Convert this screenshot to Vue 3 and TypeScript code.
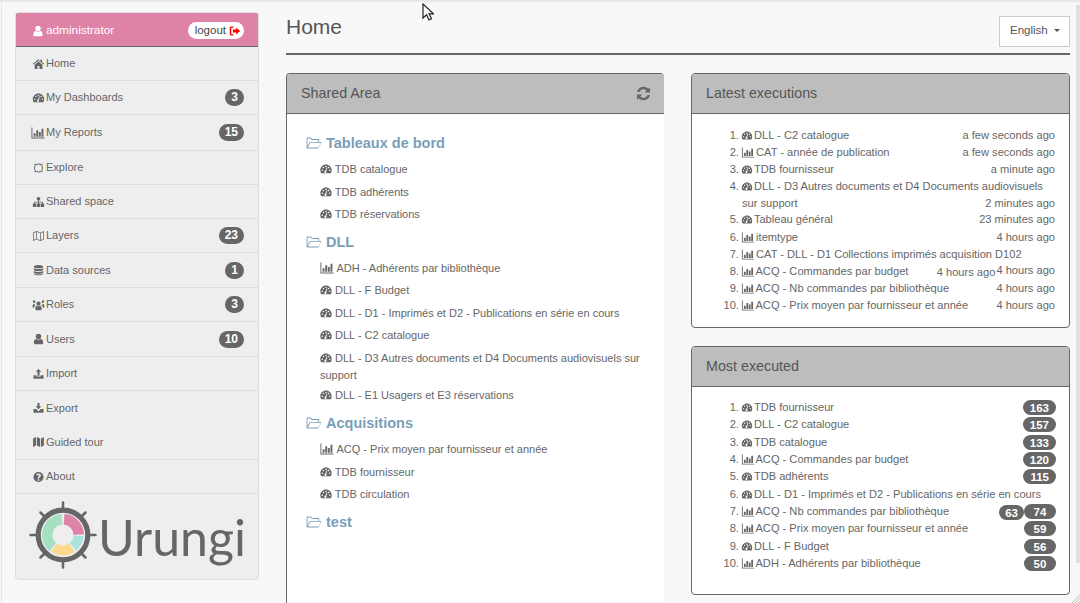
<script setup lang="ts">
const ring = (x: number, y: number, r: number) =>
  `M${x - r} ${y}a${r} ${r} 0 1 0 ${2 * r} 0a${r} ${r} 0 1 0 ${-2 * r} 0z`

const pt = (r: number, deg: number) => {
  const a = ((deg - 90) * Math.PI) / 180
  return `${(34 + r * Math.cos(a)).toFixed(2)} ${(34 + r * Math.sin(a)).toFixed(2)}`
}
const seg = (ro: number, ri: number, from: number, to: number) => {
  const large = to - from > 180 ? 1 : 0
  return `M${pt(ro, from)}A${ro} ${ro} 0 ${large} 1 ${pt(ro, to)}L${pt(ri, to)}A${ri} ${ri} 0 ${large} 0 ${pt(ri, from)}z`
}

const icons: Record<string, string> = {
  user: 'M8 8.200a3.600 3.600 0 1 0 0-7.200 3.600 3.600 0 0 0 0 7.200zM1.800 13.400c0-3 1-5.400 3-5.400.8.700 1.800 1.100 3.200 1.100s2.400-.4 3.200-1.100c2 0 3 2.400 3 5.400 0 1-.7 1.600-1.600 1.600H3.400c-.9 0-1.600-.6-1.600-1.600z',
  home: 'M8 1.500.4 7.800l.8 1L8 3.200l6.800 5.600.8-1-3-2.500V2h-2v2.600zM8 4.600 2.800 8.900v5.600h3.900v-3.800h2.600v3.800h3.900V8.900z',
  dash:
    'M8 2C3.800 2 .4 5.400.4 9.600c0 1.400.4 2.700 1 3.800.1.200.3.300.5.300h12.200c.2 0 .4-.1.500-.3.600-1.100 1-2.400 1-3.800C15.600 5.400 12.200 2 8 2z' +
    ring(3, 9.6, 1) + ring(4.5, 6, 1) + ring(8, 4.6, 1) + ring(11.5, 6, 1) + ring(13, 9.6, 1) +
    'M7 10.300 9.200 5.600l.7.300-1.600 4.800a1.400 1.400 0 1 1-1.300-.4z',
  bars: 'M.5 2h1.100v11.400h13.900v1.100H.5zM3 8.500h2.200v3.900H3zM6 5.200h2.200v7.200H6zM9 7h2.200v5.400H9zM12 3.500h2.200v8.900H12z',
  notch:
    ring(8, 8, 6) + ring(8, 8, 4.7) +
    'M2.300 2.900l1-.9 1.300 1.300-1 1zM13.700 2.900l-1-.9-1.300 1.300 1 1zM2.300 13.100l1 .9 1.300-1.300-1-1zM13.700 13.100l-1 .9-1.300-1.300 1-1z',
  sitemap: 'M5.800 1.500h4.400v4H8.600v2h5.200v2.500h1.700v4.500h-4.500V10h1.700V8.600H8.600V10h1.600v4.500H5.800V10h1.600V8.600H3.300V10H5v4.500H.5V10h1.700V7.500h5.200v-2H5.800z',
  map: 'M.7 3.200 5.400 1.400l5.200 1.800 4.700-1.800v11.400l-4.700 1.800-5.200-1.800-4.700 1.800zM1.700 3.900v9.200l3.200-1.200V2.700zM5.900 2.700v9.200l4.200 1.400V4.100zM11.100 4.100v9.200l3.200-1.200V2.900z',
  db: 'M8 1.300c3.400 0 6.300 1 6.300 2.200S11.400 5.700 8 5.700 1.700 4.700 1.700 3.500 4.600 1.300 8 1.300zM1.700 5.200c1 1 3.500 1.600 6.300 1.600s5.300-.6 6.300-1.600v2.100C14.300 8.500 11.400 9.400 8 9.400S1.700 8.500 1.700 7.300zM1.700 9c1 1 3.500 1.600 6.300 1.600s5.300-.6 6.300-1.600v2.100c0 1.200-2.900 2.100-6.300 2.100S1.700 12.300 1.700 11.100zM1.700 12.300c1 1 3.500 1.600 6.300 1.600s5.300-.6 6.300-1.600v1c0 1.200-2.900 1.700-6.300 1.700s-6.300-.5-6.300-1.700z',
  users:
    ring(8, 6.2, 2.8) +
    'M.8 1.800a2.400 2.400 0 0 1 2.600 1c.5.700.6 1.400.3 2.200-.7.600-1.400.6-2.200.2-.8-.7-1-2.200-.7-3.400zM15.200 1.800a2.400 2.400 0 0 0-2.600 1c-.5.700-.6 1.400-.3 2.200.7.600 1.400.6 2.200.2.800-.7 1-2.200.7-3.400z' +
    'M3.800 13.800c0-2.800.7-4.700 2-4.800.7.500 1.300.7 2.200.7s1.500-.2 2.200-.7c1.300.1 2 2 2 4.800 0 .6-.5 1.200-1 1.200H4.800c-.5 0-1-.6-1-1.200zM.2 9.500C.2 8 .5 6.700 1.500 6.700c.5.500 1.100.7 1.800.7.100.5.300.9.600 1.200-1 .4-1.700 1.400-1.900 3H1c-.5 0-.8-.6-.8-2.100zM15.800 9.500c0-1.500-.3-2.800-1.300-2.800-.5.500-1.100.7-1.800.7-.1.500-.3.900-.6 1.200 1 .4 1.700 1.400 1.900 3H15c.5 0 .8-.6.800-2.100z',
  upload: 'M8 1.200 11.800 5H9.400v5.200H6.600V5H4.200zM1.300 9.600h3.900v1.800h5.600V9.600h3.900v4.800H1.300z',
  download: 'M6.600 1.200h2.800v4.600h2.400L8 9.700 4.200 5.800h2.400zM1.300 9.400h3.600L8 12.500l3.100-3.100h3.600v5H1.300z',
  fmap: 'M.8 3.200 4.600 1.400v11.400L.8 14.600zM5.800 1.400l4.400 1.800v11.400l-4.400-1.800zM11.400 3.200l3.800-1.800v11.400l-3.800 1.800z',
  help:
    'M8 1.200a6.800 6.800 0 1 0 0 13.600A6.800 6.800 0 0 0 8 1.200zM7 11h2v1.900H7zM8 3.300c1.800 0 3.200 1.100 3.200 2.700 0 1.300-.7 1.900-1.400 2.300-.5.300-.8.500-.8 1V10H7V9c0-1.100.5-1.700 1.200-2.100.5-.3.900-.5.900-.9 0-.5-.5-.8-1.100-.8S7 5.600 6.500 6.100L5 5c.7-1 1.700-1.700 3-1.700z',
  logout: 'M1 3.200C1 2.400 1.700 2 2.400 2H6v1.800H3v8.400h3V14H2.400C1.700 14 1 13.600 1 12.800zM9.500 3.600 15 8l-5.500 4.400V10H5.200V6h4.300z',
  folder:
    'M.6 3.400c0-.5.4-.9.900-.9h3.300l1.500 1.500h6c.5 0 .9.400.9.900V7h1.700c.5 0 .6.400.4.700l-2.700 5.400c-.1.300-.4.400-.7.400H1.500c-.5 0-.9-.4-.9-.9zM1.500 3.400v7.800l2-3.600c.2-.4.500-.6.900-.6h7.900V5.300c0-.2-.1-.4-.4-.4H6L4.500 3.400zM4.400 7.800l-2.600 4.800h10.700l2.400-4.800z',
  refresh:
    'M15 1.200v5.800H9.200l2.200-2.200A4.600 4.600 0 0 0 3.700 6.500H1.100A7.100 7.100 0 0 1 13.200 3zM1 14.800V9h5.800l-2.200 2.200a4.600 4.600 0 0 0 7.700-1.700h2.600A7.100 7.100 0 0 1 2.800 13z',
}
const vb = (name: string) => (name === 'bars' ? '0 1.500 16 13.500' : '0 0 16 16')

interface NavItem { icon: string; label: string; badge?: number; h: string }
const nav: NavItem[] = [
  { icon: 'home', label: 'Home', h: 'r34' },
  { icon: 'dash', label: 'My Dashboards', badge: 3, h: 'r34' },
  { icon: 'bars', label: 'My Reports', badge: 15, h: 'r36' },
  { icon: 'notch', label: 'Explore', h: 'r34' },
  { icon: 'sitemap', label: 'Shared space', h: 'r34' },
  { icon: 'map', label: 'Layers', badge: 23, h: 'r34' },
  { icon: 'db', label: 'Data sources', badge: 1, h: 'r35' },
  { icon: 'users', label: 'Roles', badge: 3, h: 'r34' },
  { icon: 'user', label: 'Users', badge: 10, h: 'r35' },
  { icon: 'upload', label: 'Import', h: 'r34' },
  { icon: 'download', label: 'Export', h: 'r34 plain' },
  { icon: 'fmap', label: 'Guided tour', h: 'r35' },
  { icon: 'help', label: 'About', h: 'r34' },
]

interface TreeItem { icon: string; label: string; wrap?: boolean }
interface TreeFolder { name: string; items: TreeItem[] }
const tree: TreeFolder[] = [
  { name: 'Tableaux de bord', items: [
    { icon: 'dash', label: 'TDB catalogue' },
    { icon: 'dash', label: 'TDB adhérents' },
    { icon: 'dash', label: 'TDB réservations' },
  ] },
  { name: 'DLL', items: [
    { icon: 'bars', label: 'ADH - Adhérents par bibliothèque' },
    { icon: 'dash', label: 'DLL - F Budget' },
    { icon: 'dash', label: 'DLL - D1 - Imprimés et D2 - Publications en série en cours' },
    { icon: 'dash', label: 'DLL - C2 catalogue' },
    { icon: 'dash', label: 'DLL - D3 Autres documents et D4 Documents audiovisuels sur support', wrap: true },
    { icon: 'dash', label: 'DLL - E1 Usagers et E3 réservations' },
  ] },
  { name: 'Acquisitions', items: [
    { icon: 'bars', label: 'ACQ - Prix moyen par fournisseur et année' },
    { icon: 'dash', label: 'TDB fournisseur' },
    { icon: 'dash', label: 'TDB circulation' },
  ] },
  { name: 'test', items: [] },
]

interface LatestItem { icon: string; label: string; time: string; extra?: string; tight?: boolean }
const latest: LatestItem[] = [
  { icon: 'dash', label: 'DLL - C2 catalogue', time: 'a few seconds ago' },
  { icon: 'bars', label: 'CAT - année de publication', time: 'a few seconds ago' },
  { icon: 'dash', label: 'TDB fournisseur', time: 'a minute ago' },
  { icon: 'dash', label: 'DLL - D3 Autres documents et D4 Documents audiovisuels sur support', time: '2 minutes ago', tight: true },
  { icon: 'dash', label: 'Tableau général', time: '23 minutes ago' },
  { icon: 'bars', label: 'itemtype', time: '4 hours ago' },
  { icon: 'bars', label: 'CAT - DLL - D1 Collections imprimés acquisition D102', time: '' },
  { icon: 'bars', label: 'ACQ - Commandes par budget', time: '4 hours ago', extra: '4 hours ago' },
  { icon: 'bars', label: 'ACQ - Nb commandes par bibliothèque', time: '4 hours ago' },
  { icon: 'bars', label: 'ACQ - Prix moyen par fournisseur et année', time: '4 hours ago' },
]

interface MostItem { icon: string; label: string; count?: number; extra?: number }
const most: MostItem[] = [
  { icon: 'dash', label: 'TDB fournisseur', count: 163 },
  { icon: 'dash', label: 'DLL - C2 catalogue', count: 157 },
  { icon: 'dash', label: 'TDB catalogue', count: 133 },
  { icon: 'bars', label: 'ACQ - Commandes par budget', count: 120 },
  { icon: 'dash', label: 'TDB adhérents', count: 115 },
  { icon: 'dash', label: 'DLL - D1 - Imprimés et D2 - Publications en série en cours' },
  { icon: 'bars', label: 'ACQ - Nb commandes par bibliothèque', count: 74, extra: 63 },
  { icon: 'bars', label: 'ACQ - Prix moyen par fournisseur et année', count: 59 },
  { icon: 'dash', label: 'DLL - F Budget', count: 56 },
  { icon: 'bars', label: 'ADH - Adhérents par bibliothèque', count: 50 },
]
</script>

<template>
  <div class="page">
    <aside class="side">
      <div class="side-head">
        <svg class="ic white" viewBox="0 0 16 16"><path :d="icons.user" /></svg>
        <span class="who">administrator</span>
        <span class="logout">logout<svg class="ic red" viewBox="0 0 16 16"><path :d="icons.logout" /></svg></span>
      </div>
      <div v-for="n in nav" :key="n.label" class="nav-row" :class="n.h">
        <svg class="ic" :class="{ wide: n.icon === 'bars' }" :viewBox="vb(n.icon)"><path fill-rule="evenodd" :d="icons[n.icon]" /></svg>
        <span class="nav-label">{{ n.label }}</span>
        <span v-if="n.badge" class="badge">{{ n.badge }}</span>
      </div>
      <div class="logo">
        <svg class="wheel" viewBox="0 0 68 68">
          <g stroke="#666" stroke-width="2.500" stroke-linecap="round">
            <path d="M34 1.500v65M1.500 34h65M11.500 11.500l45 45M56.500 11.500l-45 45" />
          </g>
          <circle cx="34" cy="34" r="24.800" fill="#eee" stroke="#666" stroke-width="5.200" />
          <path :d="seg(21, 10.500, 4, 88)" fill="#de82a7" />
          <path :d="seg(20.500, 10.500, 93, 140)" fill="#a8e4dc" />
          <path :d="seg(20.500, 10.500, 145, 215)" fill="#fbd98f" />
          <path :d="seg(21, 10.500, 220, 356)" fill="#a5e0c3" />
        </svg>
        <span class="brand">Urungi</span>
      </div>
    </aside>

    <main class="main">
      <header class="top">
        <h1>Home</h1>
        <button class="lang">English <i class="caret"></i></button>
      </header>
      <div class="cols">
        <section class="panel shared">
          <div class="ph">
            <span>Shared Area</span>
            <svg class="ic refresh" viewBox="0 0 16 16"><path :d="icons.refresh" /></svg>
          </div>
          <div class="tree">
            <div v-for="f in tree" :key="f.name" class="folder">
              <div class="fname">
                <svg class="fic" viewBox="0 0 16 16"><path fill-rule="evenodd" :d="icons.folder" /></svg>{{ f.name }}
              </div>
              <div v-for="it in f.items" :key="it.label" class="titem" :class="{ wrap: it.wrap }">
                <svg class="ic" :class="{ wide: it.icon === 'bars' }" :viewBox="vb(it.icon)"><path fill-rule="evenodd" :d="icons[it.icon]" /></svg>
                {{ it.label }}
              </div>
            </div>
          </div>
        </section>

        <div class="right">
          <section class="panel latest">
            <div class="ph"><span>Latest executions</span></div>
            <ol class="list">
              <li v-for="l in latest" :key="l.label" :class="{ tight: l.tight }">
                <svg class="ic" :class="{ wide: l.icon === 'bars' }" :viewBox="vb(l.icon)"><path fill-rule="evenodd" :d="icons[l.icon]" /></svg>
                {{ l.label }}
                <span class="time" :class="{ up: l.extra }">{{ l.time }}</span>
                <span v-if="l.extra" class="time second">{{ l.extra }}</span>
              </li>
            </ol>
          </section>
          <section class="panel most">
            <div class="ph"><span>Most executed</span></div>
            <ol class="list">
              <li v-for="m in most" :key="m.label">
                <span v-if="m.count" class="pill">{{ m.count }}</span>
                <span v-if="m.extra" class="pill second">{{ m.extra }}</span>
                <svg class="ic" :class="{ wide: m.icon === 'bars' }" :viewBox="vb(m.icon)"><path fill-rule="evenodd" :d="icons[m.icon]" /></svg>
                {{ m.label }}
              </li>
            </ol>
          </section>
        </div>
      </div>
    </main>

    <svg class="cursor" viewBox="0 0 12 18"><path d="M1 1v14l3.500-3.300L7 17l2.500-1.200L7 10.800h4.500z" fill="#fff" stroke="#222" stroke-width="1.200" /></svg>
    <div class="scroll"></div>
    <svg class="grip" viewBox="0 0 8 8"><path d="M0 8 8 0M3 8l5-5M6 8l2-2" stroke="#bbb" stroke-width="1" fill="none" /></svg>
  </div>
</template>

<style>
html, body { margin: 0; background: #f8f8f8; overflow: hidden; }
</style>

<style scoped>
.page {
  position: relative;
  box-sizing: border-box;
  width: 1080px;
  height: 603px;
  overflow: hidden;
  display: flex;
  align-items: flex-start;
  gap: 27px;
  padding: 10px 10px 0 15px;
  background: #f8f8f8;
  border-top: 2px solid #e7e7e7;
  font: 11px/17px "Liberation Sans", Arial, sans-serif;
  color: #666;
}
.page::before {
  content: "";
  position: absolute;
  left: 1px;
  top: 0;
  bottom: 0;
  width: 1px;
  background: #e7e7e7;
}
.ic { width: 12px; height: 12px; fill: #666; flex: none; vertical-align: -2px; }
.ic.wide { width: 14px; }
.white { fill: #fff; }
.red { fill: #f00; margin-left: 3px; }

.side {
  box-sizing: border-box;
  width: 244px;
  height: 568px;
  flex: none;
  background: #eee;
  border: 1px solid #ddd;
  border-radius: 4px;
  overflow: hidden;
}
.side-head {
  box-sizing: border-box;
  height: 35px;
  margin: -1px -1px 0;
  display: flex;
  align-items: center;
  padding: 2px 14px 0 16px;
  background: #de82a7;
  border: 1px solid #666;
  border-radius: 4px 4px 0 0;
  color: #fff;
}
.who { margin-left: 2px; flex: 1; font-size: 11.800px; }
.logout {
  display: flex;
  align-items: center;
  background: #fff;
  color: #444;
  height: 17px;
  padding: 0 3px 0 7px;
  border-radius: 9px;
  font-size: 11.500px;
}
.nav-row {
  box-sizing: border-box;
  display: flex;
  align-items: center;
  padding: 0 14px 0 16px;
  border-bottom: 1px solid #ddd;
}
.nav-row .ic { width: 13px; height: 12px; margin-right: 1px; }
.nav-row .ic.wide { width: 14px; margin: 0 1px 0 -1px; height: 12px; }
.r34 { height: 34px; }
.r35 { height: 35px; }
.r36 { height: 36px; }
.r36 .nav-label { padding-bottom: 1px; }
.plain { border-bottom: 0; }
.nav-label { flex: 1; }
.badge {
  min-width: 7px;
  padding: 1px 6px;
  height: 15px;
  border-radius: 9px;
  background: #666;
  color: #fff;
  font-weight: 700;
  font-size: 12px;
  line-height: 15px;
  text-align: center;
}
.logo {
  display: flex;
  align-items: center;
  height: 84px;
  padding-left: 13px;
}
.wheel { width: 68px; height: 68px; flex: none; margin-top: -2px; }
.brand {
  font: 400 50px/60px Lato, sans-serif;
  color: #666;
  margin-left: 1px;
  margin-top: 2px;
}

.main { flex: 1; min-width: 0; }
.top {
  box-sizing: border-box;
  height: 43px;
  display: flex;
  justify-content: space-between;
  align-items: flex-start;
  border-bottom: 2px solid #666;
}
h1 {
  margin: 3px 0 0;
  font-size: 21px;
  line-height: 24px;
  font-weight: 400;
  color: #555;
}
.lang {
  box-sizing: border-box;
  width: 71px;
  height: 31px;
  margin-top: 4px;
  background: #fff;
  border: 1px solid #ccc;
  color: #555;
  font: 11.500px "Liberation Sans", Arial, sans-serif;
  padding: 0 0 3px 1px;
}
.caret {
  display: inline-block;
  width: 0;
  height: 0;
  margin-left: 3px;
  vertical-align: 2px;
  border-top: 3px solid #555;
  border-left: 3.500px solid transparent;
  border-right: 3.500px solid transparent;
}
.cols { display: flex; gap: 27px; margin-top: 18px; align-items: flex-start; }
.panel {
  box-sizing: border-box;
  background: #fff;
  border: 1px solid #666;
  border-radius: 4px;
  overflow: hidden;
}
.ph {
  box-sizing: border-box;
  height: 40px;
  padding: 0 14px;
  background: #bdbdbd;
  border-bottom: 1px solid #666;
  display: flex;
  align-items: center;
  justify-content: space-between;
  font-size: 14.300px;
  color: #555;
}
.shared {
  width: 378px;
  height: 560px;
  flex: none;
  border-right: 0;
  border-bottom: 0;
}
.refresh { width: 15px; height: 15px; margin-right: 13px; }
.shared .ph { padding-right: 0; }
.tree { padding: 18px 0 0 19px; }
.folder { margin-bottom: 6.300px; }
.fname {
  font-size: 14.500px;
  line-height: 22px;
  font-weight: 700;
  color: #7a9eb8;
  display: flex;
  align-items: center;
  margin-bottom: 3px;
}
.fic { width: 16px; height: 16px; fill: #7a9eb8; margin-right: 4px; }
.titem {
  padding: 4px 0 1px 14px;
  line-height: 17.500px;
  width: 325px;
  color: #666;
  font-size: 11px;
}
.titem.wrap { margin-bottom: -2.500px; }
.right { width: 379px; flex: none; display: flex; flex-direction: column; gap: 18px; }
.latest { height: 255px; }
.most { height: 249px; }
.list { margin: 0; padding: 13px 14px 0 50px; font-size: 11.100px; }
.most .list { padding-top: 12px; }
.list li { line-height: 17.150px; color: #666; }
.most .list li { line-height: 17.330px; }
.list li.tight { line-height: 16.500px; }
.list .ic { width: 12px; height: 11px; margin: 0 -2px 0 -1px; }
.list .ic.wide { width: 14px; margin: 0 -2px 0 -1px; }
.time { float: right; }
.time.up { margin: -1px 0 0; }
.time.second { margin: 1px 1px -3px 0; }
.pill {
  float: right;
  height: 15px;
  margin: 1px -1px -2px 0;
  min-width: 18px;
  padding: 0 7px;
  border-radius: 9px;
  background: #666;
  color: #fff;
  font-weight: 700;
  line-height: 16px;
  text-align: center;
  font-size: 11.500px;
}
.pill.second { margin: 2px 0 -2px 0; padding: 0 6px; min-width: 0; }

.cursor { position: absolute; left: 422px; top: 1px; width: 12px; height: 18px; }
.scroll {
  position: absolute;
  right: 0;
  top: 3px;
  width: 4px;
  height: 558px;
  background: #e0e0e0;
}
.grip { position: absolute; right: 0; bottom: 0; width: 8px; height: 8px; }
</style>
